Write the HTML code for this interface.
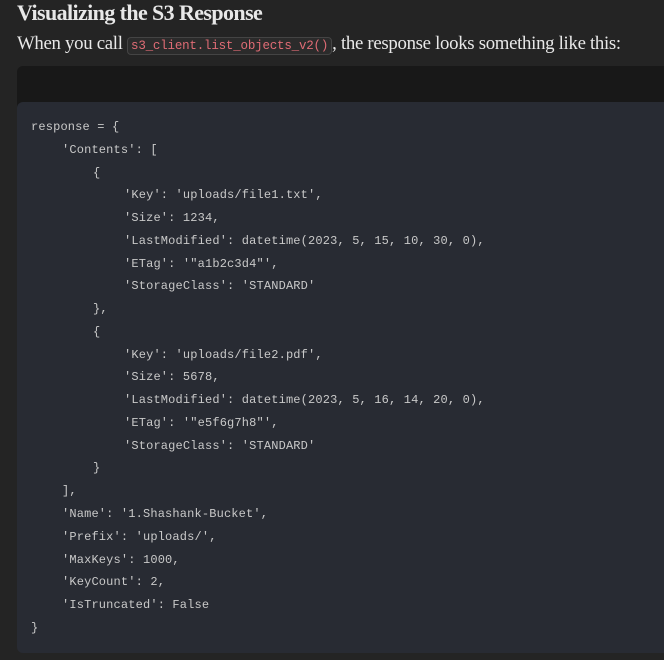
<!DOCTYPE html>
<html><head><style>
html,body{margin:0;padding:0;background:#242424;width:664px;height:660px;overflow:hidden}
h2{position:absolute;left:17px;top:0;margin:0;font:bold 22px/26px "Liberation Serif",serif;color:#e8e8e8;letter-spacing:-0.6px}
p{position:absolute;left:17px;top:31px;margin:0;font:18.8px/26px "Liberation Serif",serif;color:#e8e8e8;letter-spacing:-0.3px;white-space:nowrap}
code.i{font:12.5px "Liberation Mono",monospace;color:#e06c75;background:#2b2b2b;border:1px solid #444;border-radius:4px;padding:1px 3px;letter-spacing:-0.2px}
.top{position:absolute;left:17px;top:66px;width:660px;height:50px;background:#181818;border-radius:6px 0 0 0}
.code{position:absolute;left:17px;top:102px;width:660px;height:551px;background:#282b33;border-radius:6px 0 0 6px}
.pre{position:absolute;left:31px;top:116px;margin:0;font:12px/22.77px "Liberation Mono",monospace;color:#c9c9c9;letter-spacing:0.16px;white-space:pre}
.l1{padding-left:31px}.l2{padding-left:62px}.l3{padding-left:93px}
</style></head><body>
<h2>Visualizing the S3 Response</h2>
<p>When you call <code class="i">s3_client.list_objects_v2()</code>, the response looks something like this:</p>
<div class="top"></div>
<div class="code"></div>
<div class="pre"><div>response = {</div><div class="l1">'Contents': [</div><div class="l2">{</div><div class="l3">'Key': 'uploads/file1.txt',</div><div class="l3">'Size': 1234,</div><div class="l3">'LastModified': datetime(2023, 5, 15, 10, 30, 0),</div><div class="l3">'ETag': '"a1b2c3d4"',</div><div class="l3">'StorageClass': 'STANDARD'</div><div class="l2">},</div><div class="l2">{</div><div class="l3">'Key': 'uploads/file2.pdf',</div><div class="l3">'Size': 5678,</div><div class="l3">'LastModified': datetime(2023, 5, 16, 14, 20, 0),</div><div class="l3">'ETag': '"e5f6g7h8"',</div><div class="l3">'StorageClass': 'STANDARD'</div><div class="l2">}</div><div class="l1">],</div><div class="l1">'Name': '1.Shashank-Bucket',</div><div class="l1">'Prefix': 'uploads/',</div><div class="l1">'MaxKeys': 1000,</div><div class="l1">'KeyCount': 2,</div><div class="l1">'IsTruncated': False</div><div>}</div></div>
</body></html>
